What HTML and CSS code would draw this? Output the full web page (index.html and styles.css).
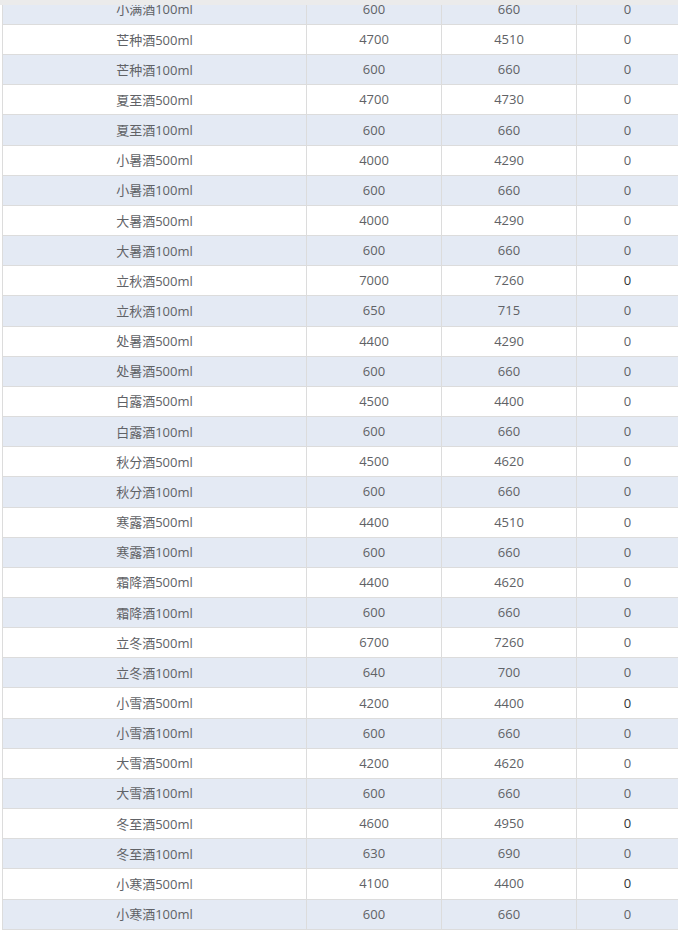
FILE: index.html
```html
<!DOCTYPE html>
<html lang="zh">
<head>
<meta charset="utf-8">
<title>table</title>
<link rel="stylesheet" href="styles.css">
</head>
<body>
<div class="topbar"></div>
<div class="table">
  <div class="row stripe"><div class="cell">小满酒100ml</div><div class="cell">600</div><div class="cell">660</div><div class="cell">0</div></div>
  <div class="row"><div class="cell">芒种酒500ml</div><div class="cell">4700</div><div class="cell">4510</div><div class="cell">0</div></div>
  <div class="row stripe"><div class="cell">芒种酒100ml</div><div class="cell">600</div><div class="cell">660</div><div class="cell">0</div></div>
  <div class="row"><div class="cell">夏至酒500ml</div><div class="cell">4700</div><div class="cell">4730</div><div class="cell">0</div></div>
  <div class="row stripe"><div class="cell">夏至酒100ml</div><div class="cell">600</div><div class="cell">660</div><div class="cell">0</div></div>
  <div class="row"><div class="cell">小暑酒500ml</div><div class="cell">4000</div><div class="cell">4290</div><div class="cell">0</div></div>
  <div class="row stripe"><div class="cell">小暑酒100ml</div><div class="cell">600</div><div class="cell">660</div><div class="cell">0</div></div>
  <div class="row"><div class="cell">大暑酒500ml</div><div class="cell">4000</div><div class="cell">4290</div><div class="cell">0</div></div>
  <div class="row stripe"><div class="cell">大暑酒100ml</div><div class="cell">600</div><div class="cell">660</div><div class="cell">0</div></div>
  <div class="row"><div class="cell">立秋酒500ml</div><div class="cell">7000</div><div class="cell">7260</div><div class="cell dark">0</div></div>
  <div class="row stripe"><div class="cell">立秋酒100ml</div><div class="cell">650</div><div class="cell">715</div><div class="cell">0</div></div>
  <div class="row"><div class="cell">处暑酒500ml</div><div class="cell">4400</div><div class="cell">4290</div><div class="cell">0</div></div>
  <div class="row stripe"><div class="cell">处暑酒500ml</div><div class="cell">600</div><div class="cell">660</div><div class="cell">0</div></div>
  <div class="row"><div class="cell">白露酒500ml</div><div class="cell">4500</div><div class="cell">4400</div><div class="cell">0</div></div>
  <div class="row stripe"><div class="cell">白露酒100ml</div><div class="cell">600</div><div class="cell">660</div><div class="cell">0</div></div>
  <div class="row"><div class="cell">秋分酒500ml</div><div class="cell">4500</div><div class="cell">4620</div><div class="cell">0</div></div>
  <div class="row stripe"><div class="cell">秋分酒100ml</div><div class="cell">600</div><div class="cell">660</div><div class="cell">0</div></div>
  <div class="row"><div class="cell">寒露酒500ml</div><div class="cell">4400</div><div class="cell">4510</div><div class="cell">0</div></div>
  <div class="row stripe"><div class="cell">寒露酒100ml</div><div class="cell">600</div><div class="cell">660</div><div class="cell">0</div></div>
  <div class="row"><div class="cell">霜降酒500ml</div><div class="cell">4400</div><div class="cell">4620</div><div class="cell">0</div></div>
  <div class="row stripe"><div class="cell">霜降酒100ml</div><div class="cell">600</div><div class="cell">660</div><div class="cell">0</div></div>
  <div class="row"><div class="cell">立冬酒500ml</div><div class="cell">6700</div><div class="cell">7260</div><div class="cell">0</div></div>
  <div class="row stripe"><div class="cell">立冬酒100ml</div><div class="cell">640</div><div class="cell">700</div><div class="cell">0</div></div>
  <div class="row"><div class="cell">小雪酒500ml</div><div class="cell">4200</div><div class="cell">4400</div><div class="cell dark">0</div></div>
  <div class="row stripe"><div class="cell">小雪酒100ml</div><div class="cell">600</div><div class="cell">660</div><div class="cell">0</div></div>
  <div class="row"><div class="cell">大雪酒500ml</div><div class="cell">4200</div><div class="cell">4620</div><div class="cell">0</div></div>
  <div class="row stripe"><div class="cell">大雪酒100ml</div><div class="cell">600</div><div class="cell">660</div><div class="cell">0</div></div>
  <div class="row"><div class="cell">冬至酒500ml</div><div class="cell">4600</div><div class="cell">4950</div><div class="cell dark">0</div></div>
  <div class="row stripe"><div class="cell">冬至酒100ml</div><div class="cell">630</div><div class="cell">690</div><div class="cell">0</div></div>
  <div class="row"><div class="cell">小寒酒500ml</div><div class="cell">4100</div><div class="cell">4400</div><div class="cell dark">0</div></div>
  <div class="row stripe"><div class="cell">小寒酒100ml</div><div class="cell">600</div><div class="cell">660</div><div class="cell">0</div></div>
</div>
</body>
</html>
```
FILE: styles.css
```css
html, body {
  margin: 0;
  padding: 0;
  background: #ffffff;
  overflow: hidden;
}
body {
  font-family: "Open Sans", "Noto Sans CJK SC", sans-serif;
  font-size: 13px;
  color: #606266;
}
.topbar {
  position: fixed;
  top: 0;
  left: 0;
  right: 0;
  height: 5px;
  background: #ebebeb;
  z-index: 2;
}
.table {
  margin-top: -5.17px;
  margin-left: 2px;
  border-left: 1px solid #dcdcdc;
}
.row {
  display: grid;
  grid-template-columns: 304px 135px 135px 1fr;
  height: 30.17px;
  box-sizing: border-box;
  border-bottom: 1px solid #dcdcdc;
  background: #ffffff;
}
.row.stripe {
  background: #e4eaf4;
}
.cell {
  display: flex;
  align-items: center;
  justify-content: center;
  padding-bottom: 1px;
  border-right: 1px solid #dcdcdc;
  white-space: nowrap;
}
.cell:last-child {
  border-right: none;
}
.cell.dark {
  color: #303133;
}
```
